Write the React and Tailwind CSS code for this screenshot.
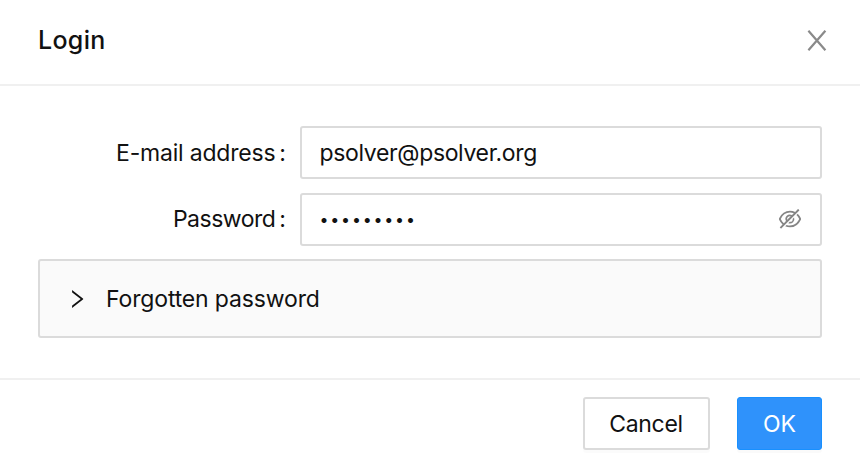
import { AiOutlineEyeInvisible, AiOutlineRight } from "react-icons/ai";

function Field({ label, labelClass, children }) {
  return (
    <div className="flex h-[53px] items-center">
      <label className="flex w-[262px] justify-end pr-[14px]">
        <span className={labelClass}>{label}</span>
        <span className="ml-[4px]">:</span>
      </label>
      <div className="flex h-full flex-1 items-center justify-between rounded-[3px] border-2 border-[#dbdbdb] bg-white pl-[17.5px] pr-[17px]">
        {children}
      </div>
    </div>
  );
}

export default function App() {
  return (
    <div className="flex h-[463px] w-[860px] flex-col bg-white font-['Inter','Liberation_Sans',sans-serif] text-[23px] leading-[36px] text-[#111111]">
      <header className="flex h-[86px] shrink-0 items-center justify-between border-b-2 border-[#f0f0f0] pb-[4px] pl-[38px] pr-[33px]">
        <h1 className="text-[25px] font-medium tracking-[0.3px]">Login</h1>
        <button aria-label="Close" className="text-[#8a8a8a]">
          <svg width="20" height="21" viewBox="0 0 20 21" fill="none" stroke="currentColor" strokeWidth="2.2">
            <path d="M1.4 0.7 L18.4 20.3 M18.4 0.7 L1.4 20.3" />
          </svg>
        </button>
      </header>

      <main className="flex flex-1 flex-col gap-[13.5px] pl-[38px] pr-[38px] pt-[40px]">
        <Field label="E-mail address" labelClass="tracking-[-0.2px]">
          <span className="tracking-[-0.35px]">psolver@psolver.org</span>
        </Field>
        <Field label="Password" labelClass="tracking-[-0.5px]">
          <span className="text-[16px] tracking-[1.8px]">•••••••••</span>
          <AiOutlineEyeInvisible className="size-[26px] text-[#858585]" />
        </Field>
        <div className="flex h-[79px] items-center rounded-[3px] border-2 border-[#dbdbdb] bg-[#fafafa] pl-[24.5px]">
          <AiOutlineRight className="size-[24px]" />
          <span className="ml-[17.5px] tracking-[-0.15px]">Forgotten password</span>
        </div>
      </main>

      <footer className="flex h-[85px] shrink-0 justify-end gap-[27px] border-t-2 border-[#f0f0f0] pr-[38px] pt-[17px]">
        <button className="h-[53px] w-[127px] rounded-[3px] border-2 border-[#dbdbdb] bg-white pr-px tracking-[-0.3px] shadow-[0_3px_0_rgba(0,0,0,0.016)]">Cancel</button>
        <button className="h-[53px] w-[85px] rounded-[3px] border border-[#1890ff] bg-[#2f92fb] text-white shadow-[0_3px_0_rgba(0,0,0,0.02)]">OK</button>
      </footer>
    </div>
  );
}
